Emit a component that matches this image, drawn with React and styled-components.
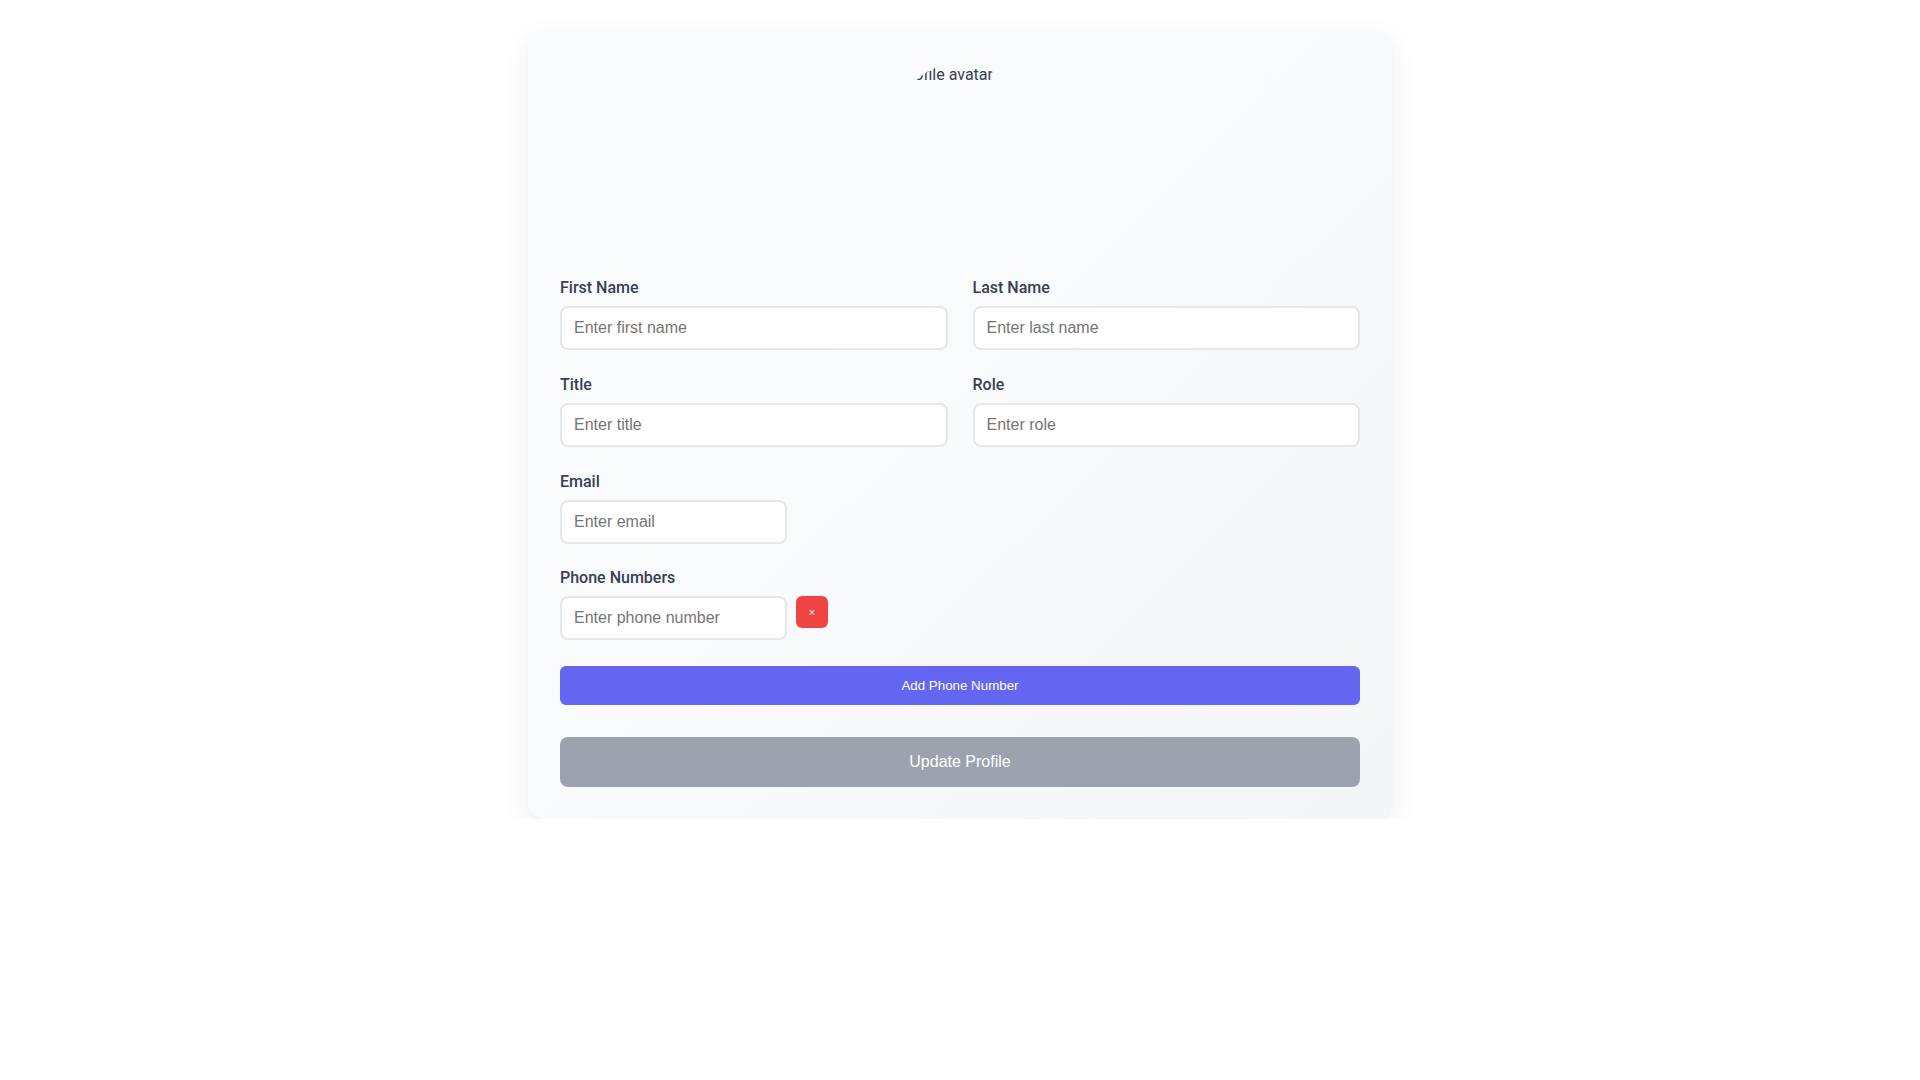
import React from "react";
import styled, { createGlobalStyle } from "styled-components";

const Global = createGlobalStyle`
  html, body { margin: 0; padding: 0; background: #ffffff; }
  body { font-family: Roboto, "Noto Sans", Arial, sans-serif; color: #374151; }
  * { box-sizing: border-box; }
`;

const Page = styled.div`
  padding-top: 31px;
  display: flex;
  justify-content: center;
`;

const Card = styled.form`
  width: 864px;
  padding: 32px;
  border-radius: 16px;
  background: linear-gradient(135deg, #fbfcfd 0%, #f9fafb 50%, #f4f5f7 100%);
  box-shadow: 0 8px 28px rgba(17, 24, 39, 0.07), 0 1px 3px rgba(17, 24, 39, 0.03);
  display: flex;
  flex-direction: column;
`;

const AvatarRow = styled.div`
  display: flex;
  justify-content: center;
  margin-bottom: 85px;
`;

const Avatar = styled.div`
  width: 128px;
  height: 128px;
  border-radius: 50%;
  overflow: hidden;
  padding-left: 3px;
  font-size: 16px;
  line-height: 24px;
  color: #374151;
  white-space: nowrap;
`;

const Grid = styled.div`
  display: grid;
  grid-template-columns: 1fr 1fr;
  column-gap: 25px;
  row-gap: 23px;
`;

const Field = styled.div`
  display: flex;
  flex-direction: column;
  margin-top: ${(p) => p.$mt || 0}px;
`;

const Label = styled.label`
  font-size: 16px;
  line-height: 24px;
  font-weight: 500;
  color: #374151;
  margin-bottom: 6px;
`;

const Input = styled.input`
  width: ${(p) => (p.$w ? `${p.$w}px` : "100%")};
  height: 44px;
  padding: 0 12px;
  border: 2px solid #e5e7eb;
  border-radius: 8px;
  background: #ffffff;
  font-family: "Liberation Sans", Arial, sans-serif;
  font-size: 16px;
  color: #111827;
  outline: none;
  &::placeholder { color: #757575; }
`;

const PhoneRow = styled.div`
  display: flex;
  align-items: flex-start;
  gap: 9px;
`;

const RemoveButton = styled.button`
  width: 32px;
  height: 32px;
  border: none;
  border-radius: 6px;
  background: #ef4444;
  color: #ffffff;
  font-family: "Liberation Sans", Arial, sans-serif;
  font-size: 11px;
  padding: 0;
  display: flex;
  align-items: center;
  justify-content: center;
`;

const ActionButton = styled.button`
  width: 100%;
  border: none;
  color: #ffffff;
  font-family: "Liberation Sans", Arial, sans-serif;
  background: ${(p) => p.$bg};
  height: ${(p) => p.$h}px;
  font-size: ${(p) => p.$fs}px;
  border-radius: ${(p) => p.$r}px;
  margin-top: ${(p) => p.$mt}px;
`;

export default function App() {
  return (
    <>
      <Global />
      <Page>
        <Card onSubmit={(e) => e.preventDefault()}>
          <AvatarRow>
            <Avatar role="img" aria-label="Profile avatar">Profile avatar</Avatar>
          </AvatarRow>
          <Grid>
            <Field>
              <Label>First Name</Label>
              <Input placeholder="Enter first name" />
            </Field>
            <Field>
              <Label>Last Name</Label>
              <Input placeholder="Enter last name" />
            </Field>
            <Field>
              <Label>Title</Label>
              <Input placeholder="Enter title" />
            </Field>
            <Field>
              <Label>Role</Label>
              <Input placeholder="Enter role" />
            </Field>
          </Grid>
          <Field $mt={23}>
            <Label>Email</Label>
            <Input $w={227} placeholder="Enter email" />
          </Field>
          <Field $mt={22}>
            <Label>Phone Numbers</Label>
            <PhoneRow>
              <Input $w={227} placeholder="Enter phone number" />
              <RemoveButton type="button">×</RemoveButton>
            </PhoneRow>
          </Field>
          <ActionButton type="button" $bg="#6366f1" $h={39} $fs={13.333} $r={6} $mt={26}>
            Add Phone Number
          </ActionButton>
          <ActionButton type="submit" $bg="#9ca3af" $h={50} $fs={16} $r={8} $mt={32}>
            Update Profile
          </ActionButton>
        </Card>
      </Page>
    </>
  );
}
